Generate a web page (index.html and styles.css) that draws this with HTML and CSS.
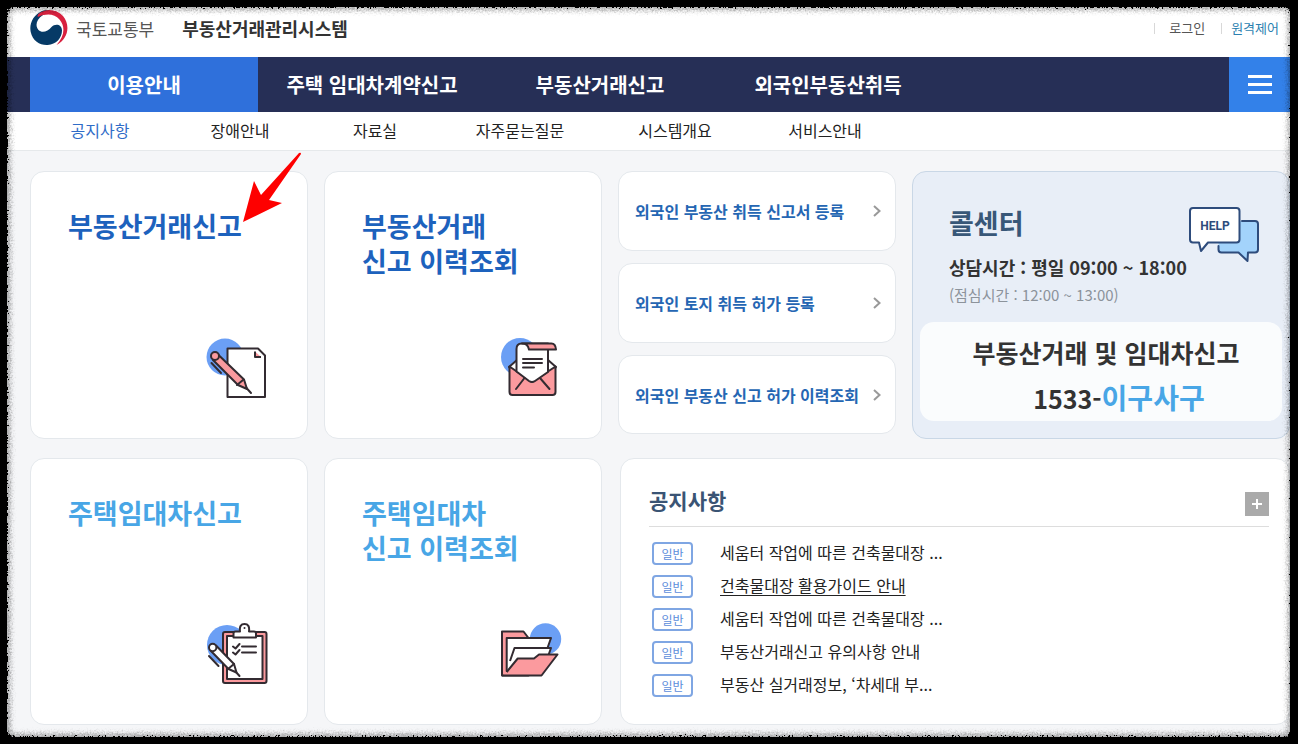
FILE: index.html
```html
<!DOCTYPE html>
<html lang="ko">
<head>
<meta charset="utf-8">
<meta name="viewport" content="width=device-width, initial-scale=1">
<title>부동산거래관리시스템</title>
<link rel="stylesheet" href="styles.css">
</head>
<body>
<div class="site">
  <header class="header">
    <a class="brand" href="#">
      <svg class="brand-mark" viewBox="0 0 38 38" aria-hidden="true">
        <path fill="#063a66" d="M12 2C3 6-1 15 .7 23c2 9 9.500 13.500 17 13C26 35.500 32 29 32 21.500c0-6.500-7-7.500-10.500-3.500C18 22.500 12 24.500 8.500 21 5 17 6 10.500 13 6c3-2 7-2.500 10-2C19 1 15 .8 12 2Z"/>
        <path fill="#d8213f" d="M9 4.500C16-1 27 0 33 7c7.500 9 5.500 23-6.500 29C34 28 36 18 29.500 10.500 24.500 5 17 4 8 8c-1-1 0-2.700 1-3.500Z"/>
      </svg>
      <span class="ministry">국토교통부</span>
      <strong class="system">부동산거래관리시스템</strong>
    </a>
    <div class="utils">
      <a href="#">로그인</a>
      <a class="remote" href="#">원격제어</a>
    </div>
  </header>

  <nav class="gnb" aria-label="주 메뉴">
    <a class="active" href="#">이용안내</a>
    <a href="#">주택 임대차계약신고</a>
    <a href="#">부동산거래신고</a>
    <a href="#">외국인부동산취득</a>
    <button class="menu" type="button" aria-label="전체 메뉴"><span></span><span></span><span></span></button>
  </nav>

  <nav class="lnb" aria-label="하위 메뉴">
    <a class="active" href="#">공지사항</a>
    <a href="#">장애안내</a>
    <a href="#">자료실</a>
    <a href="#">자주묻는질문</a>
    <a href="#">시스템개요</a>
    <a href="#">서비스안내</a>
  </nav>

  <main class="main">
    <div class="row">
      <a class="card tile" href="#">
        <span>부동산거래신고</span>
        <svg class="icon" viewBox="0 0 64 64" aria-hidden="true">
          <circle class="blob" cx="20" cy="21" r="18.500"/>
          <path class="paper" d="M22.500 12.500H53l7 7V61H22.500Z"/>
          <path class="pink" d="M50 15.500V21h6"/>
          <path class="pink" d="m8 24 4.500-6L39 43.500l3 9.500-9-4Z"/>
          <circle class="pink" cx="10" cy="20" r="4"/>
          <path class="line" d="m41 51.500 5 5.500M38 44l-6 5M6.500 27 16 37"/>
        </svg>
      </a>
      <a class="card tile" href="#">
        <span>부동산거래<br>신고 이력조회</span>
        <svg class="icon" viewBox="0 0 64 64" aria-hidden="true">
          <circle class="blob" cx="21" cy="21" r="19"/>
          <path class="paper" d="m10 31 8-7h31l8 7-10 14H20Z"/>
          <path class="pink" d="M10.500 30.500 33 46l23.500-15.500V56q0 3-3 3h-40q-3 0-3-3Z"/>
          <path class="paper" d="M17.500 35.500V13q0-5.500 5-5.500H49v28.500L36 45q-3 2-6 0Z"/>
          <path class="pink" d="M23 7.500h29.500q4 0 4.500 6H30q-1-6-7-6Z"/>
          <path class="line" d="M24 23h19M24 27h19M24 31.500h11M17 53l8.500-11M41 42l9.500 11"/>
        </svg>
      </a>
      <div class="links">
        <a class="card link" href="#">외국인 부동산 취득 신고서 등록<svg viewBox="0 0 10 14" aria-hidden="true"><path d="m2 2 5.500 5L2 12"/></svg></a>
        <a class="card link" href="#">외국인 토지 취득 허가 등록<svg viewBox="0 0 10 14" aria-hidden="true"><path d="m2 2 5.500 5L2 12"/></svg></a>
        <a class="card link" href="#">외국인 부동산 신고 허가 이력조회<svg viewBox="0 0 10 14" aria-hidden="true"><path d="m2 2 5.500 5L2 12"/></svg></a>
      </div>
      <section class="card call">
        <div class="call-info">
          <h2>콜센터</h2>
          <p class="hours">상담시간 : 평일 09:00 ~ 18:00</p>
          <p class="lunch">(점심시간 : 12:00 ~ 13:00)</p>
          <svg class="help" viewBox="0 0 72 58" aria-hidden="true">
            <path fill="#a3d3fb" d="M50 15h17q3 0 3 3v25.500q0 3-3 3h-7l-.5 8.500-9-8.500H33.500q-3 0-3-3V36Z"/>
            <path class="outline" d="M54 15h13q3 0 3 3v25.500q0 3-3 3h-7l-.5 8.500-9-8.500H33.500q-3 0-3-3V40"/>
            <path class="outline bubble" d="M5 2h43.500q3 0 3 3v28.500q0 3-3 3H20L13 45l-2-8.500H5q-3 0-3-3V5q0-3 3-3Z"/>
            <text x="27" y="24" text-anchor="middle">HELP</text>
          </svg>
        </div>
        <div class="phone">
          <p>부동산거래 및 임대차신고</p>
          <p class="number">1533-<em>이구사구</em></p>
        </div>
      </section>
    </div>

    <div class="row">
      <a class="card tile light" href="#">
        <span>주택임대차신고</span>
        <svg class="icon" viewBox="0 0 64 64" aria-hidden="true">
          <circle class="blob" cx="22" cy="23" r="20"/>
          <rect class="pink" x="18" y="10" width="43.500" height="51" rx="2"/>
          <path class="paper" d="M22 14h35.500v43H22Z"/>
          <path class="paper" d="M28.500 15.500v-4q0-2 2-2h4.500q-1-7.500 4.500-7.500t4.500 7.500h5q2 0 2 2v4Z"/>
          <circle class="dot" cx="39.500" cy="6" r="1"/>
          <path class="line" d="m28 24.500 2.500 2 4-4.500M28 30.500l2.500 2 4-4.500M37 24.500h14M37 30.500h14"/>
          <path class="paper" d="m5.500 28.500 5.500-5L29 42l2.500 8.500-8-3.500Z"/>
          <circle class="paper" cx="7.700" cy="25.500" r="3.700"/>
          <path class="line" d="m30.500 49.500 4 4.500M29 42l-6 5M4 34l9.500 10"/>
        </svg>
      </a>
      <a class="card tile light" href="#">
        <span>주택임대차<br>신고 이력조회</span>
        <svg class="icon" viewBox="0 0 64 64" aria-hidden="true">
          <circle class="blob" cx="46.500" cy="17" r="15.700"/>
          <path class="pink" d="M3 9.500h21.500l5 6.500v37.500H3Z"/>
          <path class="paper" d="M7.700 16H52l-3.500 10-4 23H7.700Z"/>
          <path class="paper" d="m11 39 4.500-13H52l-2.500 7-20 14L9 49"/>
          <path class="pink" d="m7.700 50 11-13.500H35l5-4h18.500l-16 21H3"/>
        </svg>
      </a>
      <section class="card notice">
        <div class="notice-head">
          <h2>공지사항</h2>
          <button class="more" type="button" aria-label="공지사항 더보기"></button>
        </div>
        <ul>
          <li><span class="tag">일반</span><a href="#">세움터 작업에 따른 건축물대장 ...</a></li>
          <li><span class="tag">일반</span><a class="current" href="#">건축물대장 활용가이드 안내</a></li>
          <li><span class="tag">일반</span><a href="#">세움터 작업에 따른 건축물대장 ...</a></li>
          <li><span class="tag">일반</span><a href="#">부동산거래신고 유의사항 안내</a></li>
          <li><span class="tag">일반</span><a href="#">부동산 실거래정보, ‘차세대 부...</a></li>
        </ul>
      </section>
    </div>
  </main>

  <svg class="pointer" viewBox="0 0 60 72" aria-hidden="true"><path d="m1 71 11-41 7 14L57 2q2-1 2 1L27 49l13 3Z"/></svg>
</div>

<div class="frame"></div>
<svg class="defs" aria-hidden="true">
  <filter id="rough" x="-2%" y="-3%" width="104%" height="106%">
    <feTurbulence type="fractalNoise" baseFrequency="0.600" numOctaves="2" seed="4" result="noise"/>
    <feDisplacementMap in="SourceGraphic" in2="noise" scale="8" xChannelSelector="R" yChannelSelector="G"/>
  </filter>
</svg>
</body>
</html>
```

FILE: styles.css
```css
* { box-sizing: border-box; }

body {
  margin: 0;
  background: #000;
  color: #222;
  font-family: "Noto Sans CJK KR", "Noto Sans", sans-serif;
  font-size: 16px;
}

a { color: inherit; text-decoration: none; }
h2, p, ul { margin: 0; padding: 0; }
ul { list-style: none; }
button { border: 0; padding: 0; }

.site {
  position: relative;
  display: flex;
  flex-direction: column;
  min-height: 100vh;
  padding: 7px 8px 7px 7px;
}

.frame {
  position: absolute;
  inset: 7px;
  border-radius: 8px;
  box-shadow: 0 0 0 20px #000, inset 0 0 5px 3px rgba(0, 0, 0, 0.35);
  filter: url(#rough);
  pointer-events: none;
}

.defs { position: absolute; width: 0; height: 0; }

.header {
  display: flex;
  justify-content: space-between;
  align-items: center;
  height: 50px;
  padding: 0 11px 8px 23px;
  background: #fff;
}

.brand { display: flex; align-items: center; }
.brand-mark { width: 38px; height: 38px; margin-right: 8px; }
.ministry { margin-right: 28px; color: #555; font-size: 17px; }
.system { color: #333; font-size: 18px; }

.utils { display: flex; color: #555; font-size: 13px; line-height: 14px; }
.utils a { padding-left: 15px; margin-left: 16px; position: relative; }
.utils .remote { padding-left: 10px; color: #2c7fb0; }
.utils a::before {
  content: "";
  position: absolute;
  left: 0;
  top: 2px;
  height: 11px;
  border-left: 1px solid #d8d8d8;
}

.gnb {
  display: flex;
  height: 55px;
  padding-left: 23px;
  background: #262f56;
  color: #fff;
  font-size: 20px;
  font-weight: 700;
}
.gnb a { display: flex; flex: 0 1 228px; align-items: center; justify-content: center; }
.gnb .active { background: #2f70db; }

.menu {
  display: flex;
  flex-direction: column;
  align-items: center;
  justify-content: center;
  gap: 5px;
  width: 61px;
  margin-left: auto;
  background: #3381e9;
}
.menu span { width: 24px; height: 3px; background: #fff; }

.lnb {
  display: grid;
  grid-template-columns: 140px 140px 130px 160px 150px 150px;
  align-items: center;
  height: 39px;
  padding: 0 0 2px 23px;
  border-bottom: 1px solid #e6e9eb;
  background: #fff;
  text-align: center;
}
.lnb .active { color: #2f6cc8; }

.main {
  display: flex;
  flex: 1;
  flex-direction: column;
  gap: 19px;
  padding: 20px 0 12px 23px;
  background: #f5f6f8;
}

.row {
  display: grid;
  flex: 1 1 0;
  grid-template-columns: 278fr 278fr 278fr 378fr;
  gap: 16px;
}

.card {
  border: 1px solid #e4e8ec;
  border-radius: 14px;
  background: #fff;
}

.tile {
  display: flex;
  flex-direction: column;
  justify-content: space-between;
  padding: 36px 38px 38px 37px;
  color: #1d62bd;
  font-size: 27px;
  font-weight: 700;
  line-height: 35px;
}
.light { color: #48a6e6; }

.icon { align-self: flex-end; width: 64px; height: 64px; }
.icon path, .icon rect, .icon circle { stroke: #332b31; stroke-width: 2; stroke-linejoin: round; }
.icon .blob { fill: #6b9ff5; stroke: none; }
.icon .paper { fill: #fff; }
.icon .pink { fill: #fb9a9e; }
.icon .line { fill: none; stroke-linecap: round; }
.icon .dot { stroke: none; fill: #332b31; }

.links { display: flex; flex-direction: column; gap: 12px; padding-bottom: 4px; }
.link {
  display: flex;
  flex: 1;
  align-items: center;
  justify-content: space-between;
  padding: 0 13px 0 16px;
  color: #2566b3;
  font-size: 16px;
  font-weight: 700;
  white-space: nowrap;
}
.link svg { width: 10px; height: 14px; }
.link path { fill: none; stroke: #999; stroke-width: 2; }

.call {
  display: flex;
  flex-direction: column;
  justify-content: space-between;
  padding: 33px 7px 17px;
  border-color: #c9d7e6;
  background: #e8eef7;
}
.call-info { position: relative; padding-left: 29px; }
.call h2 { color: #385778; font-size: 27px; line-height: 36px; }
.hours { margin-top: 10px; color: #333; font-size: 18px; font-weight: 700; line-height: 32px; white-space: nowrap; }
.lunch { color: #8c939b; font-size: 15px; line-height: 24px; }
.help { position: absolute; right: 22px; top: 1px; width: 72px; height: 58px; }
.outline { fill: none; stroke: #2e4c7c; stroke-width: 2; stroke-linejoin: round; stroke-linecap: round; }
.bubble { fill: #fff; }
.help text { fill: #2e4c7c; font: 700 12px Roboto, sans-serif; }

.phone {
  padding: 8px 0 0 10px;
  border-radius: 14px;
  background: #fafcfd;
  color: #333;
  font-size: 25px;
  font-weight: 700;
  line-height: 45px;
  text-align: center;
  white-space: nowrap;
}
.number { padding-left: 26px; }
.number em { color: #48a6e6; font-size: 28px; font-style: normal; }

.notice { grid-column: 3 / 5; margin-left: 2px; padding: 24px 20px 0 28px; }
.notice-head {
  display: flex;
  align-items: center;
  justify-content: space-between;
  height: 44px;
  border-bottom: 1px solid #ddd;
}
.notice h2 { padding-bottom: 8px; color: #3a5474; font-size: 21px; line-height: 36px; }
.more {
  width: 24px;
  height: 24px;
  background:
    linear-gradient(#fff, #fff) center / 10px 2px no-repeat,
    linear-gradient(#fff, #fff) center / 2px 10px no-repeat,
    #aaa;
}
.notice ul { padding: 10px 0 0 3px; }
.notice li { display: flex; align-items: center; gap: 27px; height: 33px; }
.notice li a { padding-bottom: 3px; }
.tag {
  width: 41px;
  border: 2px solid #7fa6e3;
  border-radius: 4px;
  color: #5d8edb;
  font-size: 12px;
  line-height: 19px;
  text-align: center;
}
.notice .current { text-decoration: underline; text-underline-offset: 3px; }

.pointer { position: absolute; left: 242px; top: 151px; width: 60px; height: 72px; fill: #fe0000; }
```
